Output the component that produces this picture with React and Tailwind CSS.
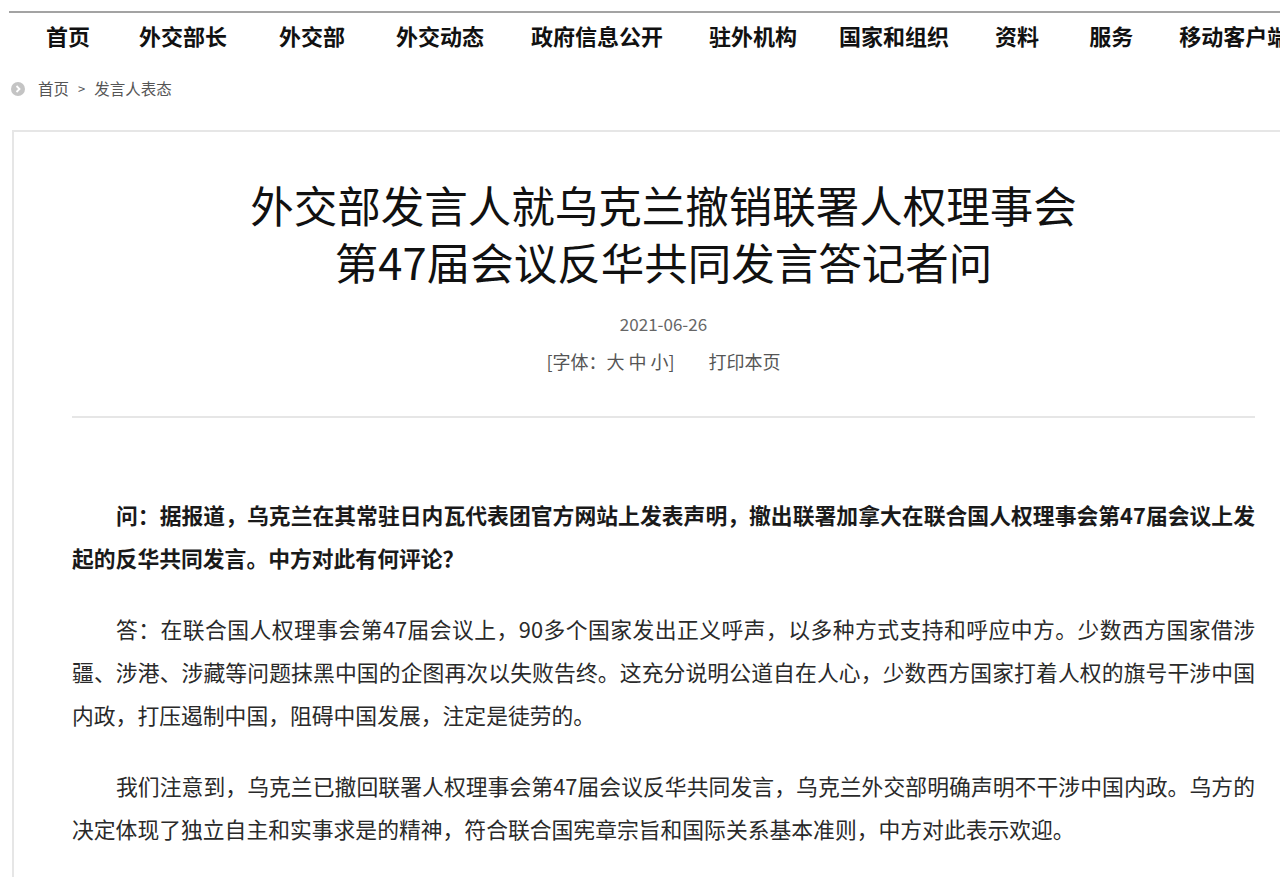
import React from 'react';

// 顶部导航
const navItems = [
  { label: '首页', cls: 'ml-[46px]' },
  { label: '外交部长', cls: 'ml-[49px]' },
  { label: '外交部', cls: 'ml-[52px]' },
  { label: '外交动态', cls: 'ml-[51px]' },
  { label: '政府信息公开', cls: 'ml-[47px]' },
  { label: '驻外机构', cls: 'ml-[46px]' },
  { label: '国家和组织', cls: 'ml-[42px]' },
  { label: '资料', cls: 'ml-[46px]' },
  { label: '服务', cls: 'ml-[50px]' },
  { label: '移动客户端', cls: 'ml-[46px]' },
];

// 正文：按原页面的换行拆分
const paragraphs = [
  {
    bold: true,
    lines: [
      '问：据报道，乌克兰在其常驻日内瓦代表团官方网站上发表声明，撤出联署加拿大在联合国人权理事会第47届会议上发',
      '起的反华共同发言。中方对此有何评论？',
    ],
  },
  {
    bold: false,
    lines: [
      '答：在联合国人权理事会第47届会议上，90多个国家发出正义呼声，以多种方式支持和呼应中方。少数西方国家借涉',
      '疆、涉港、涉藏等问题抹黑中国的企图再次以失败告终。这充分说明公道自在人心，少数西方国家打着人权的旗号干涉中国',
      '内政，打压遏制中国，阻碍中国发展，注定是徒劳的。',
    ],
  },
  {
    bold: false,
    lines: [
      '我们注意到，乌克兰已撤回联署人权理事会第47届会议反华共同发言，乌克兰外交部明确声明不干涉中国内政。乌方的',
      '决定体现了独立自主和实事求是的精神，符合联合国宪章宗旨和国际关系基本准则，中方对此表示欢迎。',
    ],
  },
];

const App = () => {
  return (
    <div className="w-full min-h-screen overflow-hidden bg-white font-['Noto_Sans_CJK_SC','Noto_Sans',sans-serif]">
      <div className="w-[1330px]">
        {/* 顶部灰线 */}
        <div className="pl-[9px] pt-[11px]">
          <div className="h-[2px] bg-[#a3a3a3]"></div>
        </div>

        {/* 导航 */}
        <nav className="flex mt-[9px] h-[29px] whitespace-nowrap">
          {navItems.map((item, i) => (
            <a key={i} href="#" className={`${item.cls} text-[22px] leading-[26px] font-bold text-[#111]`}>
              {item.label}
            </a>
          ))}
        </nav>

        {/* 面包屑 */}
        <div className="flex items-center mt-[28px] pl-[11px] h-[20px] text-[15.5px] text-[#555]">
          <span className="w-[14px] h-[14px] rounded-full bg-[#c4c4c4] flex items-center justify-center">
            <svg width="8" height="8" viewBox="0 0 8 8">
              <path d="M2.5 1 L5.5 4 L2.5 7" stroke="#fff" strokeWidth="1.8" fill="none" />
            </svg>
          </span>
          <a href="#" className="ml-[13px]">首页</a>
          <span className="mx-[9px] text-[13px]">&gt;</span>
          <a href="#">发言人表态</a>
        </div>

        {/* 文章 */}
        <div className="mt-[31px] ml-[12px] border-2 border-[#e6e6e6] pl-[58px] pt-[44px] pb-[40px]">
          <div className="w-[1183px]">
            <h1 className="text-center text-[43.5px] leading-[57px] font-normal text-[#111]">
              外交部发言人就乌克兰撤销联署人权理事会<br />
              第47届会议反华共同发言答记者问
            </h1>
            <div className="mt-[22px] text-center text-[17px] leading-[24px] text-[#666]">2021-06-26</div>
            <div className="mt-[13px] flex justify-center text-[18px] leading-[24px] text-[#555]">
              <span>[字体：大 中 小]</span>
              <a href="#" className="ml-[34px]">打印本页</a>
            </div>
            <div className="mt-[43px] h-[2px] bg-[#e6e6e6]"></div>

            <div className="mt-[75px] flex flex-col gap-[28px] text-[21.8px] leading-[43px] text-[#2a2a2a]">
              {paragraphs.map((p, i) => (
                <div key={i} className={p.bold ? 'font-bold text-[#1a1a1a]' : ''}>
                  {p.lines.map((line, j) => (
                    <div
                      key={j}
                      className={`whitespace-nowrap ${j === 0 ? 'pl-[44px]' : ''} ${
                        j < p.lines.length - 1 ? 'text-justify [text-align-last:justify]' : ''
                      }`}
                    >
                      {line}
                    </div>
                  ))}
                </div>
              ))}
            </div>
          </div>
        </div>
      </div>
    </div>
  );
};

export default App;
